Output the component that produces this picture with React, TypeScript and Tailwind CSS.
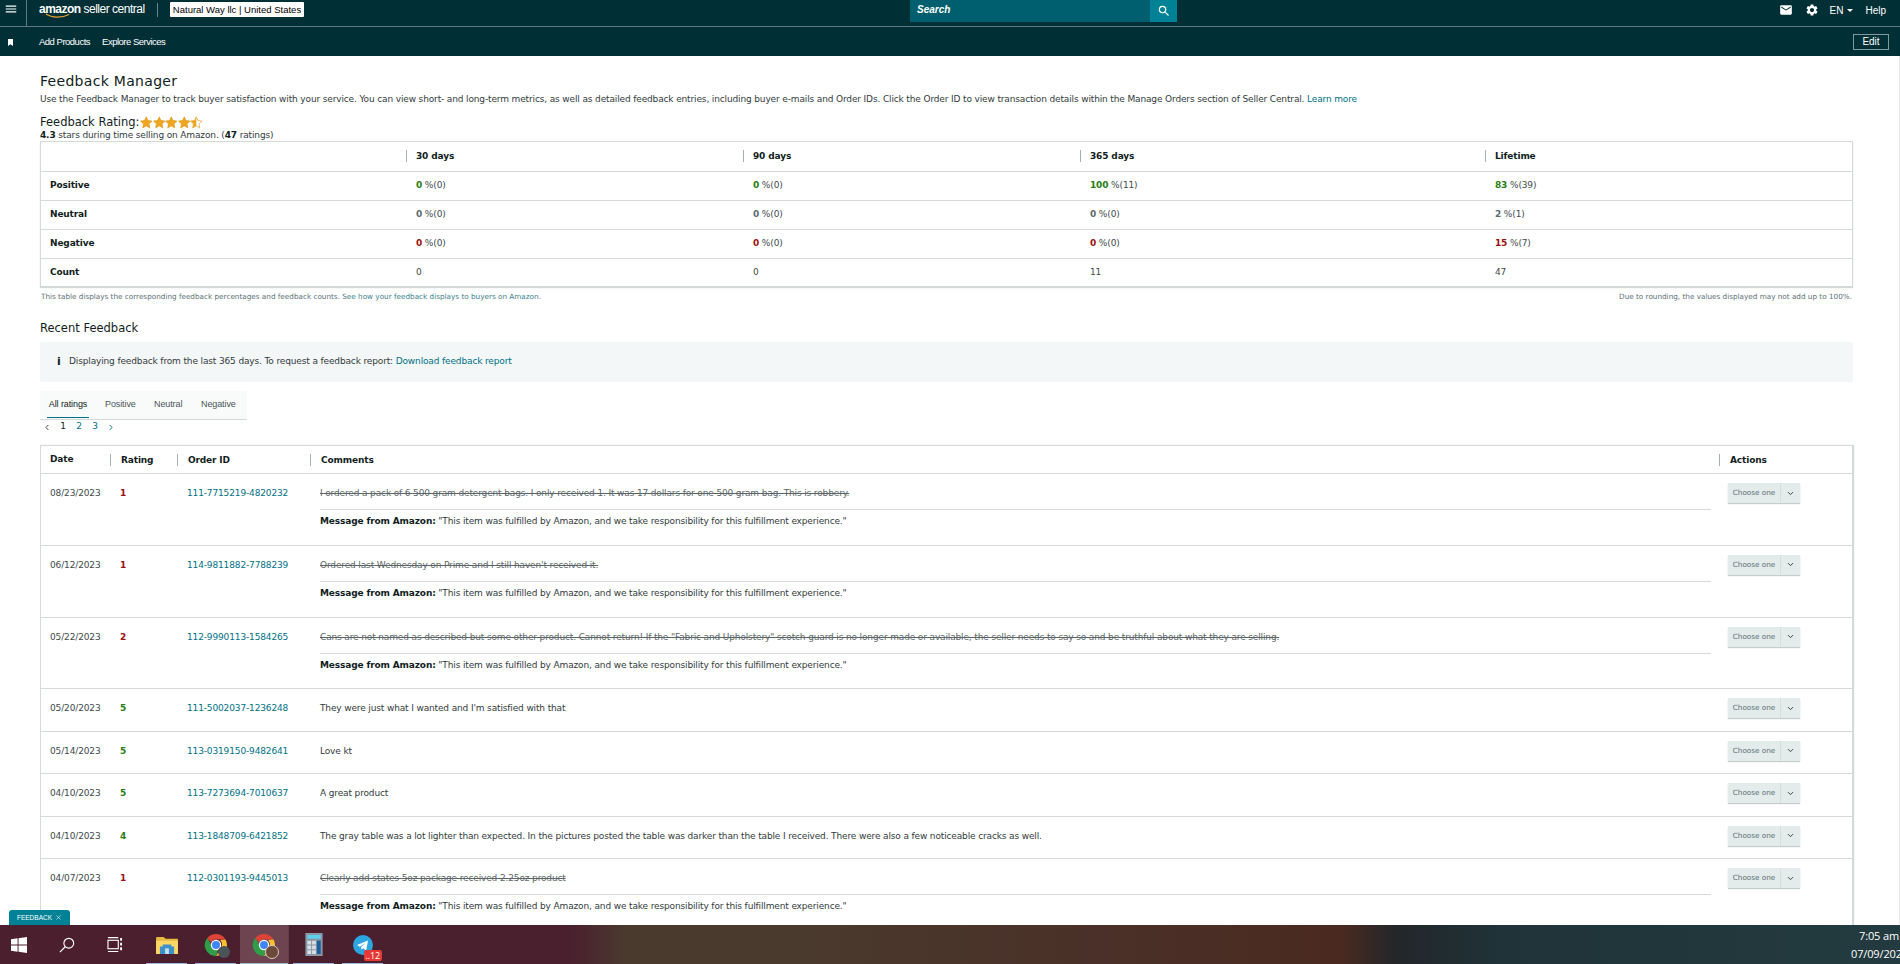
import React from 'react';
import { ChevronDown, ChevronLeft, ChevronRight, X } from 'lucide-react';
import { MdMail, MdMenu, MdSearch, MdSettings } from 'react-icons/md';

const MSG = '"This item was fulfilled by Amazon, and we take responsibility for this fulfillment experience."';

const stats = [
  { label: 'Positive', color: 'text-[#2a7d12]', cells: [['0', '%(0)'], ['0', '%(0)'], ['100', '%(11)'], ['83', '%(39)']] },
  { label: 'Neutral', color: 'text-[#5c6b70]', cells: [['0', '%(0)'], ['0', '%(0)'], ['0', '%(0)'], ['2', '%(1)']] },
  { label: 'Negative', color: 'text-[#9c0f0f]', cells: [['0', '%(0)'], ['0', '%(0)'], ['0', '%(0)'], ['15', '%(7)']] },
];

const rows = [
  { date: '08/23/2023', rating: 1, order: '111-7715219-4820232', text: 'I ordered a pack of 6 500 gram detergent bags. I only received 1. It was 17 dollars for one 500 gram bag. This is robbery.', struck: true },
  { date: '06/12/2023', rating: 1, order: '114-9811882-7788239', text: "Ordered last Wednesday on Prime and I still haven't received it.", struck: true },
  { date: '05/22/2023', rating: 2, order: '112-9990113-1584265', text: 'Cans are not named as described but some other product. Cannot return! If the "Fabric and Upholstery" scotch guard is no longer made or available, the seller needs to say so and be truthful about what they are selling.', struck: true },
  { date: '05/20/2023', rating: 5, order: '111-5002037-1236248', text: "They were just what I wanted and I'm satisfied with that", struck: false },
  { date: '05/14/2023', rating: 5, order: '113-0319150-9482641', text: 'Love kt', struck: false },
  { date: '04/10/2023', rating: 5, order: '113-7273694-7010637', text: 'A great product', struck: false },
  { date: '04/10/2023', rating: 4, order: '113-1848709-6421852', text: 'The gray table was a lot lighter than expected. In the pictures posted the table was darker than the table I received. There were also a few noticeable cracks as well.', struck: false },
  { date: '04/07/2023', rating: 1, order: '112-0301193-9445013', text: 'Clearly add states 5oz package received 2.25oz product', struck: true },
];

function Star({ half }: { half?: boolean }) {
  const d = 'M6.500 0.600l1.800 3.900 4.200.5-3.100 2.900.8 4.200-3.700-2.100-3.700 2.100.8-4.200L.5 5l4.200-.5z';
  return (
    <svg width="12.500" height="13" viewBox="0 0 13 13">
      <path d={d} fill={half ? '#fff' : '#f0a51e'} stroke="#d98f10" strokeWidth="0.600" />
      {half && <path d="M6.500 0.600v9.400l-3.700 2.100.8-4.200L.5 5l4.200-.5z" fill="#f0a51e" />}
    </svg>
  );
}

function ChromeIcon() {
  return (
    <svg width="24" height="24" viewBox="0 0 24 24">
      <path d="M12 1a11 11 0 0 1 9.500 5.500H12a5.500 5.500 0 0 0-5 3.200L3.300 5A11 11 0 0 1 12 1z" fill="#db4437" />
      <path d="M21.500 6.500A11 11 0 0 1 12 23l4.700-8.200A5.500 5.500 0 0 0 16 7z" fill="#fbc02d" />
      <path d="M12 23A11 11 0 0 1 3.300 5L8 13a5.500 5.500 0 0 0 6 4z" fill="#2e9e49" />
      <circle cx="12" cy="12" r="5.200" fill="#fff" />
      <circle cx="12" cy="12" r="4" fill="#4285f4" />
    </svg>
  );
}

function Taskbar() {
  return (
    <div className="h-[39px] shrink-0 flex items-center bg-[linear-gradient(90deg,#4b1f2d_0%,#4a1f2e_30%,#4a3a2e_33%,#4a3a2e_41%,#4a3028_58%,#4a2a20_70.5%,#23262a_73.5%,#1f3338_79%,#233b40_100%)] font-['Open_Sans',sans-serif] text-white">
      <div className="w-[38px] flex justify-center">
        <svg width="16" height="16" viewBox="0 0 17 17" fill="#fff">
          <path d="M0 2.400l7-1v6.600H0zM8 1.200L17 0v8H8zM0 9h7v6.600l-7-1zM8 9h9v8l-9-1.200z" />
        </svg>
      </div>
      <div className="w-[58px] flex justify-center">
        <svg width="16" height="16" viewBox="0 0 18 18" fill="none" stroke="#fff" strokeWidth="1.300">
          <circle cx="11" cy="7" r="5.500" />
          <path d="M7 11l-6 6" />
        </svg>
      </div>
      <div className="w-[38px] mr-[8px] flex justify-center">
        <svg width="16" height="15" viewBox="0 0 17 16" fill="none" stroke="#fff" strokeWidth="1.200">
          <path d="M1 .6h11M1 15.400h11" />
          <rect x="1" y="3.500" width="11" height="9" />
          <path d="M15 1v3M15 6v3M15 11v3" strokeWidth="2" />
        </svg>
      </div>
      <div className="w-[49px] h-full flex justify-center items-center relative">
        <svg width="22" height="18" viewBox="0 0 23 19">
          <path d="M0 2a1 1 0 0 1 1-1h7l2 2h13v16H0z" fill="#e8b93f" />
          <rect y="5" width="23" height="14" fill="#fbd765" />
          <path d="M7 9h9v2h3v8H4v-8h3z" fill="#3f8fc9" />
          <rect x="9.500" y="13" width="4" height="6" fill="#bfe0f5" />
        </svg>
        <div className="absolute bottom-0 inset-x-[4px] h-[1px] bg-[#9fb8d8]" />
      </div>
      <div className="w-[49px] h-full flex justify-center items-center relative">
        <ChromeIcon />
        <div className="absolute right-[10px] bottom-[6px] w-[12px] h-[12px] rounded-full bg-[#4a5458]" />
        <div className="absolute bottom-0 inset-x-[4px] h-[1px] bg-[#9fb8d8]" />
      </div>
      <div className="w-[49px] h-full flex justify-center items-center relative bg-[#6d4450] border-r border-[#5a4048]">
        <ChromeIcon />
        <div className="absolute right-[9px] bottom-[5px] w-[14px] h-[14px] rounded-full bg-[#6b4a3c] border border-[#d9c8b8]" />
        <div className="absolute bottom-0 inset-x-0 h-[1px] bg-[#9fb8d8]" />
      </div>
      <div className="w-[49px] h-full flex justify-center items-center relative">
        <svg width="18" height="23" viewBox="0 0 18 24">
          <rect width="18" height="24" fill="#8a96a3" />
          <rect x="2" y="2" width="14" height="4" fill="#5fd0ea" />
          <path d="M2 8h4v4H2zM7 8h4v4H7zM2 13h4v4H2zM7 13h4v4H7zM2 18h4v4H2zM7 18h4v4H7z" fill="#d9dee3" />
          <rect x="12" y="8" width="4" height="14" fill="#1d5f9e" />
        </svg>
        <div className="absolute bottom-0 inset-x-[4px] h-[1px] bg-[#9fb8d8]" />
      </div>
      <div className="w-[49px] h-full flex justify-center items-center relative">
        <svg width="20" height="20" viewBox="0 0 22 22">
          <circle cx="11" cy="11" r="11" fill="#2ca5e0" />
          <path d="M4.500 11l12-5-2 11-3.500-2.500-1.800 1.800-.3-3 5-4.500-6.500 4z" fill="#fff" />
        </svg>
        <div className="absolute right-[5px] bottom-[3px] rounded-[2px] bg-[#e53935] px-[2px] text-[9px] leading-[11px]">..12</div>
        <div className="absolute bottom-0 inset-x-[4px] h-[1px] bg-[#9fb8d8]" />
      </div>
      <div className="flex-1" />
      <div className="w-[49px] overflow-hidden text-[11px] leading-[18px] whitespace-nowrap">
        <div className="pl-[8px]">7:05 am</div>
        <div>07/09/2023</div>
      </div>
    </div>
  );
}

export default function App() {
  return (
    <div className="h-[964px] w-[1900px] overflow-hidden flex flex-col relative bg-white font-['DejaVu_Sans',sans-serif] text-[9px] tracking-[-0.14px] text-[#111d21]">
      <header className="shrink-0 bg-[#002f36] text-white font-['Liberation_Sans',sans-serif] tracking-normal">
        <div className="h-[27px] flex items-start border-b border-[#5f7b80]">
          <div className="w-[27px] h-[26px] pl-[4px] pt-[2px] border-r border-[#5f7b80]">
            <MdMenu size={14} />
          </div>
          <div className="ml-[12px] w-[118px] h-[20px] relative">
            <span className="text-[12px] tracking-[-0.5px] leading-[18px] whitespace-nowrap"><span className="font-bold">amazon</span> seller central</span>
            <svg className="absolute left-[6px] top-[13px]" width="26" height="6" viewBox="0 0 26 6" fill="none" stroke="#f0a030" strokeWidth="1.200">
              <path d="M1 1c6 4 16 4 23 .5" />
            </svg>
          </div>
          <div className="mt-[3px] w-[1px] h-[14px] bg-[#6a8489]" />
          <div className="ml-[12px] mt-[2px] h-[15px] w-[134px] bg-white text-black text-[9.500px] leading-[15px] text-center rounded-[1px] whitespace-nowrap">Natural Way llc | United States</div>
          <div className="ml-[606px] w-[267px] h-[22px] flex bg-[#005f6e]">
            <div className="flex-1 pl-[7px] text-[10px] leading-[19px] italic font-bold">Search</div>
            <div className="w-[27px] bg-[#008296] flex justify-center items-center">
              <MdSearch size={14} />
            </div>
          </div>
          <div className="flex-1 flex justify-end items-center h-[20px] pr-[14px] text-[10px]">
            <MdMail size={14} />
            <MdSettings size={14} className="ml-[12px]" />
            <span className="ml-[11px]">EN</span>
            <svg className="ml-[4px] mt-[2px]" width="6" height="4" viewBox="0 0 6 4" fill="#fff"><path d="M0 0h6L3 3z" /></svg>
            <span className="ml-[12px]">Help</span>
          </div>
        </div>
        <div className="h-[29px] flex items-center pt-[1px]">
          <div className="w-[39px] pl-[8px]">
            <svg width="5" height="7" viewBox="0 0 5 7" fill="#fff"><path d="M0 0h5v7L2.500 5.300 0 7z" /></svg>
          </div>
          <span className="text-[9.500px] tracking-[-0.5px]">Add Products</span>
          <span className="ml-[12px] text-[9.500px] tracking-[-0.5px]">Explore Services</span>
          <div className="ml-auto mr-[11px] w-[36px] h-[16px] border border-[#7f9a9e] text-center text-[10px] leading-[14px]">Edit</div>
        </div>
      </header>

      <main className="flex-1 overflow-hidden pl-[40px] pr-[46px] pt-[17px] border-r border-[#e8e8e8]">
        <h1 className="text-[14px] leading-[16px] tracking-[0.3px] font-normal">Feedback Manager</h1>
        <p className="mt-[4px] leading-[12px] text-[#333b3d] whitespace-nowrap">
          Use the Feedback Manager to track buyer satisfaction with your service. You can view short- and long-term metrics, as well as detailed feedback entries, including buyer e-mails and Order IDs. Click the Order ID to view transaction details within the Manage Orders section of Seller Central. <span className="text-[#007185]">Learn more</span>
        </p>
        <div className="mt-[10px] flex items-center h-[15px]">
          <span className="text-[11.500px] tracking-normal">Feedback Rating:</span>
          <span className="ml-[1px] flex"><Star /><Star /><Star /><Star /><Star half /></span>
        </div>
        <p className="-mt-[1px] leading-[12px] text-[#333b3d]"><b className="text-[#111d21]">4.3</b> stars during time selling on Amazon. (<b className="text-[#111d21]">47</b> ratings)</p>

        <div className="border border-[#d5d9d9] shadow-[0_1px_1px_#d5d9d9] bg-white">
          <div className="grid grid-cols-[365px_337px_337px_405px_1fr] h-[30px] pb-[2px] items-center font-bold border-b border-[#d5d9d9]">
            <div />
            {['30 days', '90 days', '365 days', 'Lifetime'].map((h) => (
              <div key={h} className="border-l border-[#a8b0b0] pl-[9px] h-[12px] leading-[12px]">{h}</div>
            ))}
          </div>
          {stats.map((s) => (
            <div key={s.label} className="grid grid-cols-[365px_337px_337px_405px_1fr] h-[29px] items-center border-b border-[#d5d9d9]">
              <div className="pl-[9px] font-bold">{s.label}</div>
              {s.cells.map((c, i) => (
                <div key={i} className="pl-[10px] text-[#414a4c]"><b className={s.color}>{c[0]}</b> {c[1]}</div>
              ))}
            </div>
          ))}
          <div className="grid grid-cols-[365px_337px_337px_405px_1fr] h-[27px] items-center">
            <div className="pl-[9px] font-bold">Count</div>
            {['0', '0', '11', '47'].map((c, i) => <div key={i} className="pl-[10px] text-[#414a4c]">{c}</div>)}
          </div>
        </div>
        <div className="mt-[5px] flex justify-between text-[7.250px] tracking-normal leading-[10px] text-[#5c7076] px-[1px]">
          <span>This table displays the corresponding feedback percentages and feedback counts. <span className="text-[#3d7f8c]">See how your feedback displays to buyers on Amazon.</span></span>
          <span>Due to rounding, the values displayed may not add up to 100%.</span>
        </div>

        <h2 className="mt-[19px] text-[11.500px] leading-[15px] font-normal tracking-normal">Recent Feedback</h2>
        <div className="mt-[6px] h-[40px] bg-[#f3f7f7] rounded-[2px] flex items-center pl-[17px] text-[#333b3d]">
          <span className="w-[12px] font-bold text-[11px] text-[#111d21]">i</span>
          <span>Displaying feedback from the last 365 days. To request a feedback report: <span className="text-[#007185]">Download feedback report</span></span>
        </div>
        <div className="mt-[9px] w-[207px] h-[29px] bg-[#f9fafa] border-b border-[#d5d9d9] flex items-stretch font-['Liberation_Sans',sans-serif] text-[9px] tracking-[-0.1px] text-[#4a5557] pl-[7px]">
          <div className="w-[42px] border-b border-[#007185] mb-[1px] text-[#111d21] pt-[7px] text-center whitespace-nowrap">All ratings</div>
          <div className="ml-[16px] w-[30px] pt-[7px]">Positive</div>
          <div className="ml-[19px] w-[28px] pt-[7px]">Neutral</div>
          <div className="ml-[19px] pt-[7px]">Negative</div>
        </div>
        <div className="-ml-[1px] h-[14px] flex items-center text-[#007185]">
          <ChevronLeft size={9} strokeWidth={2.500} className="w-[16px] text-[#333b3d]" />
          <span className="w-[16px] text-center text-[#111d21]">1</span>
          <span className="w-[16px] text-center">2</span>
          <span className="w-[16px] text-center">3</span>
          <ChevronRight size={9} strokeWidth={2.500} className="w-[16px]" />
        </div>

        <div className="mt-[11px] border border-[#d5d9d9] border-b-0 shadow-[1px_0_1px_#d5d9d9]">
          <div className="grid grid-cols-[69px_67px_133px_1409px_1fr] h-[28px] items-center font-bold border-b border-[#d5d9d9]">
            <div className="pl-[9px]">Date</div>
            {['Rating', 'Order ID', 'Comments', 'Actions'].map((h) => (
              <div key={h} className="border-l border-[#a8b0b0] pl-[10px] h-[12px] leading-[12px]">{h}</div>
            ))}
          </div>
          {rows.map((r, i) => (
            <div key={i} className={`grid grid-cols-[69px_67px_133px_1409px_1fr] border-b border-[#d5d9d9] ${r.struck ? 'h-[71.750px]' : 'h-[42.500px]'}`}>
              <div className="pl-[9px] pt-[13px] leading-[12px] text-[#414a4c]">{r.date}</div>
              <div className={`pl-[10px] pt-[13px] leading-[12px] font-bold ${r.rating > 3 ? 'text-[#2a7d12]' : 'text-[#9c0f0f]'}`}>{r.rating}</div>
              <div className="pl-[10px] pt-[13px] leading-[12px] text-[#007185]">{r.order}</div>
              <div className="pl-[10px] pr-[8px] pt-[13px] leading-[12px]">
                <div className={r.struck ? 'line-through text-[#5c6668] pb-[10px] border-b border-[#d5d9d9]' : 'text-[#333b3d]'}>{r.text}</div>
                {r.struck && <div className="pt-[5px] text-[#333b3d]"><b className="text-[#111d21]">Message from Amazon:</b> {MSG}</div>}
              </div>
              <div className="pl-[9px] pt-[9px]">
                <div className="w-[72px] h-[20px] bg-[#e3ebeb] shadow-[0_1px_1px_#c5cccc] flex items-center text-[7.250px] tracking-normal text-[#5c7076]">
                  <span className="w-[53px] border-r border-[#d5dddd] leading-[20px] text-center">Choose one</span>
                  <ChevronDown size={9} strokeWidth={2.500} className="ml-[5px] text-[#333b3d]" />
                </div>
              </div>
            </div>
          ))}
        </div>
      </main>

      <div className="absolute left-[9px] top-[910px] w-[61px] h-[15px] bg-[#008296] rounded-t-[3px] flex items-center justify-center gap-[3px] text-white text-[6.500px] tracking-normal font-['Liberation_Sans',sans-serif]">
        FEEDBACK <X size={7} strokeWidth={2} />
      </div>
      <Taskbar />
    </div>
  );
}
